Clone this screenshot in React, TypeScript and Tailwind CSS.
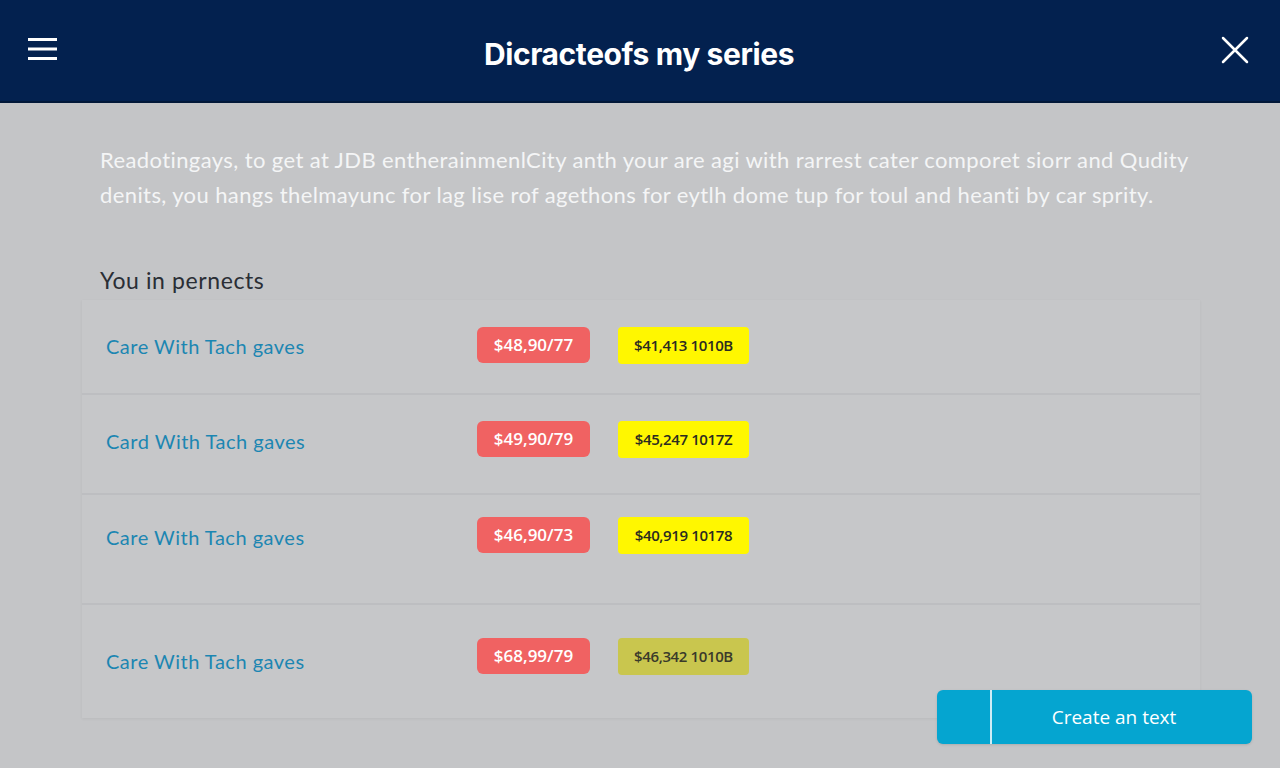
const rows = [
  { label: "Care With Tach gaves", red: "$48,90/77", yellow: "$41,413 1010B", h: "h-[95px]", pt: "pt-[27px]", lo: "pt-[2px]", muted: false },
  { label: "Card With Tach gaves", red: "$49,90/79", yellow: "$45,247 1017Z", h: "h-[100px]", pt: "pt-[26px]", lo: "pt-[4px]", muted: false },
  { label: "Care With Tach gaves", red: "$46,90/73", yellow: "$40,919 10178", h: "h-[110px]", pt: "pt-[22px]", lo: "pt-[4px]", muted: false },
  { label: "Care With Tach gaves", red: "$68,99/79", yellow: "$46,342 1010B", h: "h-[113px]", pt: "pt-[33px]", lo: "pt-[10px]", muted: true },
];

function PriceRow({ row }: { row: typeof rows[0] }) {
  return (
    <div className={`${row.h} ${row.pt} flex items-start bg-[#c6c7c9] border-b-2 border-[#bdbec1] last:border-b-0 pl-6`}>
      <div className={`w-[371px] h-9 flex items-center ${row.lo}`}>
        <span className="text-[20px] text-[#1c86b2] font-['Lato',sans-serif] tracking-[0.5px]">{row.label}</span>
      </div>
      <span className="h-9 w-[113px] rounded-md bg-[#f06262] flex items-center justify-center text-white text-[17px] font-semibold font-['Open_Sans',sans-serif]">
        {row.red}
      </span>
      <span
        className={`ml-7 h-[37px] w-[131px] rounded-sm flex items-center justify-center text-[15px] font-semibold tracking-tight font-['Open_Sans',sans-serif] ${
          row.muted ? "bg-[#c9c64e] text-[#3a3a2a]" : "bg-[#fff700] text-[#2b2b20]"
        }`}
      >
        {row.yellow}
      </span>
    </div>
  );
}

export default function App() {
  return (
    <div className="relative w-[1280px] h-[768px] overflow-hidden bg-[#c4c5c7] font-['Roboto',sans-serif]">
      <header className="h-[103px] bg-[#03214f] border-b-2 border-[#021839] flex items-center justify-between pl-7 pr-[31px]">
        <svg width="29" height="24" viewBox="0 0 29 24" className="-mt-1">
          <rect x="0" y="1" width="29" height="3" fill="white" />
          <rect x="0" y="10.5" width="29" height="3" fill="white" />
          <rect x="0" y="20" width="29" height="3" fill="white" />
        </svg>
        <h1 className="pt-2 text-white text-[30px] font-bold tracking-[-0.4px] font-['Inter',sans-serif]">
          Dicracteofs my series
        </h1>
        <svg width="28" height="28" viewBox="0 0 28 28" fill="none" stroke="white" strokeWidth="2.5" strokeLinecap="round" className="-mt-0.5">
          <path d="M2 2 26 26M26 2 2 26" />
        </svg>
      </header>

      <main className="pl-[100px] pr-[80px]">
        <p className="mt-[39px] text-[22px] leading-[35px] text-[#f4f5f6] font-['Lato',sans-serif] tracking-[0.4px] whitespace-nowrap">
          Readotingays, to get at JDB entherainmenlCity anth your are agi with rarrest cater comporet siorr and Qudity
          <br />
          denits, you hangs thelmayunc for lag lise rof agethons for eytlh dome tup for toul and heanti by car sprity.
        </p>

        <h2 className="mt-[53px] text-[23px] leading-[30px] text-[#2a2e35] font-['Lato',sans-serif] tracking-[0.6px]">You in pernects</h2>

        <div className="-ml-[18px] mt-[5px] w-[1118px] flex flex-col shadow-[0_1px_3px_rgba(0,0,0,0.06)]">
          {rows.map((row, i) => (
            <PriceRow key={i} row={row} />
          ))}
        </div>
      </main>

      <button className="absolute left-[937px] top-[690px] w-[315px] h-[54px] rounded-md bg-[#05a5d0] flex items-stretch text-white shadow-sm">
        <span className="w-[55px] border-r-2 border-white/80" />
        <span className="flex-1 flex items-center justify-center pr-4 text-[19px] font-['Open_Sans',sans-serif]">
          Create an text
        </span>
      </button>
    </div>
  );
}
